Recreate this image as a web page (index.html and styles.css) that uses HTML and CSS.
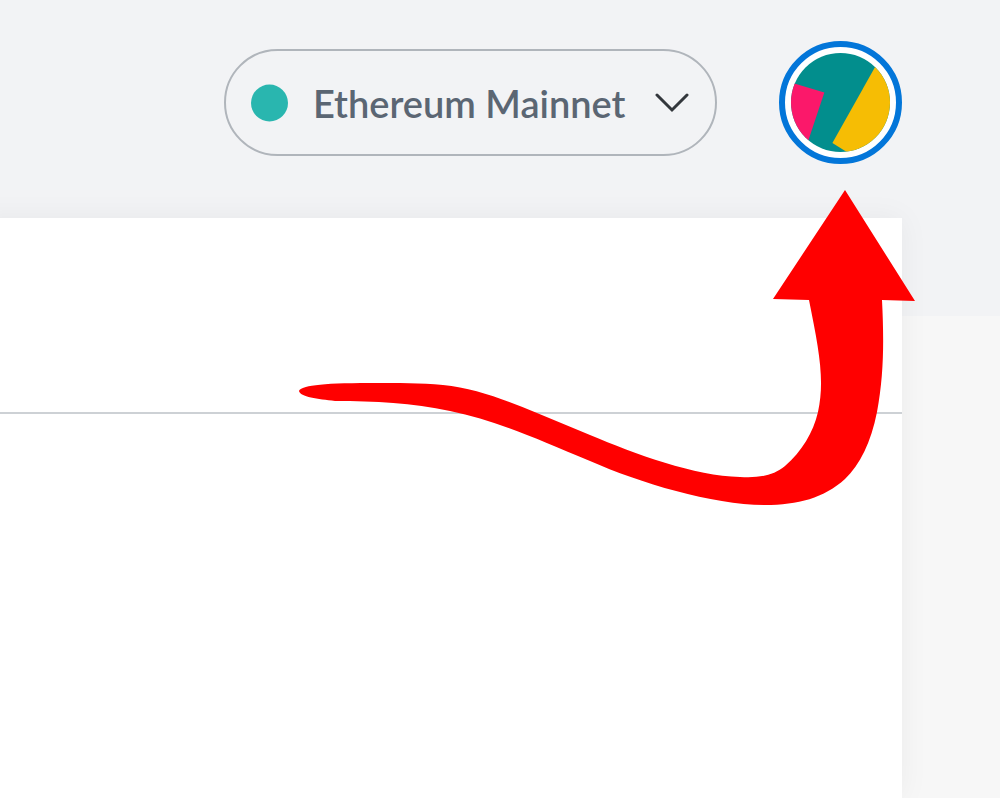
FILE: index.html
```html
<!DOCTYPE html>
<html lang="en">
<head>
    <meta charset="UTF-8">
    <meta name="viewport" content="width=device-width, initial-scale=1.0">
    <title>Wallet</title>
    <link rel="stylesheet" href="styles.css">
</head>
<body>
    <header class="header">
        <div class="network">
            <span class="network-dot"></span>
            <select class="network-select" aria-label="Network">
                <option>Ethereum Mainnet</option>
            </select>
            <svg class="network-chevron" viewBox="0 0 34 20" aria-hidden="true">
                <path d="M2 2 L17 17 L32 2" />
            </svg>
        </div>

        <button class="account" type="button" aria-label="My account">
            <svg class="account-icon" viewBox="0 0 98 98" aria-hidden="true">
                <clipPath id="account-circle"><circle cx="49" cy="49" r="49" /></clipPath>
                <g clip-path="url(#account-circle)">
                    <rect width="98" height="98" fill="#028e8d" />
                    <path d="M-4 28 L33 39 L14 96 L-20 90 Z" fill="#fb186a" />
                    <path d="M86 9 L41 89 L60 101 L110 98 V4 Z" fill="#f6bd04" />
                </g>
            </svg>
        </button>
    </header>

    <main class="panel">
        <div class="panel-bar"></div>
    </main>

    <!-- Arrow pointing at the account button -->
    <svg class="arrow" viewBox="299 190 616 315" aria-hidden="true">
        <path d="M845 190 L915 301 L882 300 C884 340 884 375 877 412 C871 442 860 465 845 479
                 C824 498 798 505 765 505 C713 505 640 483 590 461 C535 438 495 420 450 411
                 C412 403 375 401 335 401 C318 399 300 397 299 391 C301 386 318 383 370 383
                 C400 383 420 383 443 385 C475 388 505 400 537 413 L590 435
                 C635 454 695 476 740 477 C759 478 773 476 785 466 C802 451 813 433 818 412
                 C825 380 819 350 809 300 L773 299 Z" />
    </svg>
</body>
</html>
```

FILE: styles.css
```css
* {
    box-sizing: border-box;
}

body {
    display: flex;
    flex-direction: column;
    min-height: 100vh;
    margin: 0;
    font-family: Lato, "Liberation Sans", sans-serif;
    background: linear-gradient(#f2f3f5 316px, #f7f7f7 316px);
    position: relative;
    overflow-x: hidden;
}

.header {
    display: flex;
    align-items: center;
    justify-content: flex-end;
    gap: 62px;
    padding: 41px 98px 54px 20px;
}

.network {
    position: relative;
}

.network-select {
    appearance: none;
    height: 107px;
    padding: 0 89px 0 87px;
    border: 2px solid #b0b5bb;
    border-radius: 54px;
    background: transparent;
    color: #5b6673;
    font-family: inherit;
    font-size: 38px;
    font-weight: 600;
    cursor: pointer;
}

.network-dot {
    position: absolute;
    top: 50%;
    left: 27px;
    width: 37px;
    height: 37px;
    border-radius: 50%;
    background: #29b6af;
    transform: translateY(-50%);
    pointer-events: none;
}

.network-chevron {
    position: absolute;
    top: 50%;
    right: 28px;
    width: 34px;
    height: 20px;
    fill: none;
    stroke: #33373c;
    stroke-width: 3;
    stroke-linecap: round;
    transform: translateY(-50%);
    pointer-events: none;
}

.account {
    display: flex;
    padding: 6px;
    border: 6px solid #0376d9;
    border-radius: 50%;
    background: white;
    cursor: pointer;
}

.account-icon {
    width: 99px;
    height: 99px;
}

/* extends past the left edge so the shadow only shows on top and right */
.panel {
    flex: 1;
    margin: 0 98px 0 -30px;
    background: white;
    box-shadow: 0 0 28px rgba(0, 0, 0, 0.05);
}

.panel-bar {
    height: 196px;
    border-bottom: 2px solid #cdd1d5;
}

.arrow {
    position: absolute;
    top: 190px;
    right: 85px;
    width: 616px;
    height: 315px;
    fill: #ff0000;
    pointer-events: none;
}
```
